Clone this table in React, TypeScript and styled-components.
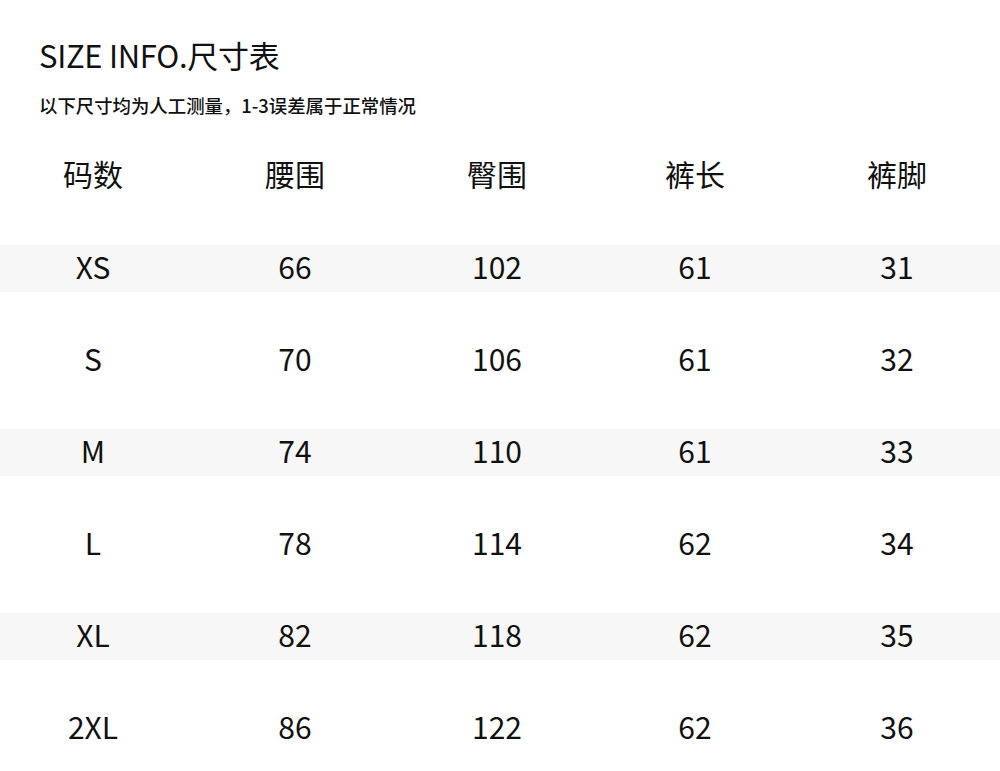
import React from 'react';
import styled, { createGlobalStyle } from 'styled-components';

const GlobalStyle = createGlobalStyle`
  html, body {
    margin: 0;
    padding: 0;
    background: #ffffff;
  }
  body {
    font-family: "Noto Sans CJK SC", "Noto Sans", sans-serif;
    color: #111111;
  }
`;

const sizes = [
  { size: 'XS', waist: 66, hip: 102, length: 61, hem: 31 },
  { size: 'S', waist: 70, hip: 106, length: 61, hem: 32 },
  { size: 'M', waist: 74, hip: 110, length: 61, hem: 33 },
  { size: 'L', waist: 78, hip: 114, length: 62, hem: 34 },
  { size: 'XL', waist: 82, hip: 118, length: 62, hem: 35 },
  { size: '2XL', waist: 86, hip: 122, length: 62, hem: 36 },
];

const headers = ['码数', '腰围', '臀围', '裤长', '裤脚'];

const App = () => {
  return (
    <Page>
      <GlobalStyle />
      <Intro>
        <Title>SIZE INFO.尺寸表</Title>
        <Note>以下尺寸均为人工测量，1-3误差属于正常情况</Note>
      </Intro>

      <Table>
        <HeadRow>
          <Cells>
            {headers.map((h) => (
              <Cell key={h}>{h}</Cell>
            ))}
          </Cells>
        </HeadRow>

        {sizes.map((s, i) => (
          <Row key={s.size}>
            <Band $striped={i % 2 === 0}>
              <Cells>
                <Cell>{s.size}</Cell>
                <Cell>{s.waist}</Cell>
                <Cell>{s.hip}</Cell>
                <Cell>{s.length}</Cell>
                <Cell>{s.hem}</Cell>
              </Cells>
            </Band>
          </Row>
        ))}
      </Table>
    </Page>
  );
};

//Styling -------

const Page = styled.div`
  width: 1000px;
  height: 771px;
  overflow: hidden;
  background: #ffffff;
`;

const Intro = styled.div`
  padding: 36px 0 0 39px;
  display: flex;
  flex-direction: column;
`;

const Title = styled.h1`
  margin: 0;
  font-size: 31px;
  font-weight: 400;
  line-height: 38px;
  color: #111;
  letter-spacing: -0.3px;
`;

const Note = styled.p`
  margin: 18px 0 0 0;
  font-size: 18.4px;
  font-weight: 500;
  line-height: 26px;
  color: #111;
`;

const Table = styled.div`
  margin-top: 12px;
  display: flex;
  flex-direction: column;
`;

const Row = styled.div`
  height: 92px;
  display: flex;
  align-items: center;
`;

const HeadRow = styled(Row)`
  padding-bottom: 6px;
  box-sizing: border-box;
`;

const Band = styled.div<{ $striped: boolean }>`
  width: 100%;
  height: 47px;
  box-sizing: border-box;
  padding-bottom: 4px;
  display: flex;
  align-items: center;
  background: ${(p) => (p.$striped ? '#f7f7f7' : 'transparent')};
`;

const Cells = styled.div`
  display: grid;
  grid-template-columns: 202px 202px 202px 194px 210px;
  margin-left: -8px;
  width: 1010px;
`;

const Cell = styled.div`
  text-align: center;
  font-size: 30px;
  font-weight: 400;
  line-height: 40px;
  color: #111;
`;

export default App;
